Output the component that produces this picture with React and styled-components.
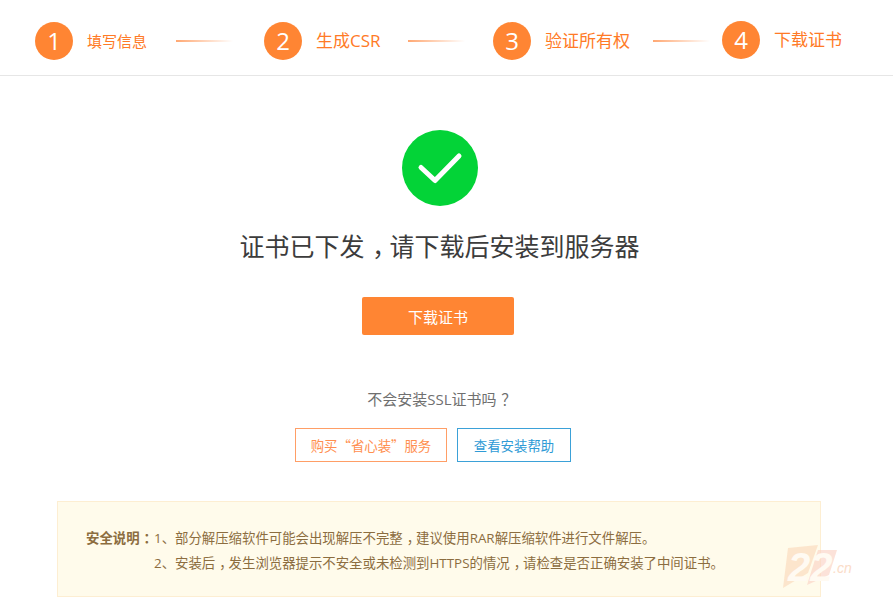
import React from "react";
import styled, { createGlobalStyle } from "styled-components";

const Global = createGlobalStyle`
  html, body { margin: 0; padding: 0; background: #fff; }
  body { font-family: "Open Sans", "Noto Sans CJK SC", sans-serif; }
`;
const Page = styled.div`
  position: relative;
  width: 893px;
  height: 604px;
  overflow: hidden;
`;
const Steps = styled.div`
  height: 53px;
  border-bottom: 1px solid #e6e6e6;
  display: flex;
  align-items: flex-start;
  padding: 22px 0 0 35px;
`;
const Step = styled.div`
  display: flex;
  align-items: center;
  margin-top: ${(p) => (p.$up ? "-1px" : "0")};
`;
const Circle = styled.div`
  width: 38px;
  height: 38px;
  border-radius: 50%;
  background: #ff8533;
  color: #fff;
  font-size: 24px;
  line-height: 38px;
  text-align: center;
  margin-right: 14px;
`;
const StepLabel = styled.span`
  color: #ff7a26;
  font-size: ${(p) => p.$size}px;
  line-height: 38px;
  white-space: nowrap;
  width: ${(p) => p.$w}px;
`;
const Line = styled.div`
  width: 57px;
  height: 2px;
  margin-left: ${(p) => p.$ml}px;
  margin-right: ${(p) => p.$mr}px;
  background: linear-gradient(to right, #ffa873, rgba(255, 168, 115, 0));
`;
const Main = styled.main`
  width: 879px;
  display: flex;
  flex-direction: column;
  align-items: center;
  padding-top: 54px;
`;
const Title = styled.h1`
  margin: 23px 0 0;
  font-size: 25px;
  font-weight: 400;
  line-height: 34px;
  color: #3c3c3c;
  white-space: nowrap;
`;
const Punct = styled.span`
  margin-left: 0.3em;
  letter-spacing: -0.3em;
`;
const Primary = styled.button`
  width: 152px;
  height: 38px;
  margin: 34px 3px 0 0;
  border: 0;
  border-radius: 2px;
  background: #ff8533;
  color: #fff;
  font: inherit;
  font-size: 15px;
  padding: 0;
`;
const Question = styled.p`
  margin: 53px 0 0;
  font-size: 15px;
  line-height: 22px;
  color: #6f6f6f;
  white-space: nowrap;
`;
const Actions = styled.div`
  display: flex;
  gap: 10px;
  margin: 18px 13px 0 0;
`;
const Outline = styled.a`
  width: ${(p) => p.$w}px;
  height: 34px;
  box-sizing: border-box;
  border: 1px solid ${(p) => p.$border};
  color: ${(p) => p.$color};
  font-family: "Noto Sans CJK SC", sans-serif;
  font-size: 13.4px;
  line-height: 32px;
  text-align: center;
  white-space: nowrap;
`;
const Notice = styled.section`
  width: 764px;
  height: 96px;
  box-sizing: border-box;
  margin: 39px 1px 0 0;
  padding: 24px 0 0 28px;
  background: #fffbeb;
  border: 1px solid #fdeed2;
  color: #8c6d3f;
  font-size: 13.4px;
  line-height: 25px;
  display: flex;
`;
const NoticeHead = styled.strong`
  font-weight: 700;
  width: 68px;
  flex: none;
  white-space: nowrap;
`;
const NoticeList = styled.div`
  white-space: nowrap;
`;
const Watermark = styled.svg`
  position: absolute;
  left: 782px;
  top: 543px;
  width: 72px;
  height: 52px;
`;

export default function App() {
  return (
    <Page>
      <Global />
      <Steps>
        <Step>
          <Circle>1</Circle>
          <StepLabel $size={15} $w={61}>填写信息</StepLabel>
          <Line $ml={28} $mr={31} />
        </Step>
        <Step>
          <Circle>2</Circle>
          <StepLabel $size={17} $w={66}>生成CSR</StepLabel>
          <Line $ml={26} $mr={28} />
        </Step>
        <Step>
          <Circle>3</Circle>
          <StepLabel $size={17} $w={86}>验证所有权</StepLabel>
          <Line $ml={22} $mr={12} />
        </Step>
        <Step $up>
          <Circle>4</Circle>
          <StepLabel $size={17} $w={68}>下载证书</StepLabel>
        </Step>
      </Steps>
      <Main>
        <svg width="76" height="76" viewBox="0 0 76 76">
          <circle cx="38" cy="38" r="38" fill="#03d337" />
          <path d="M19 37.5 L33 50.5 L57 26" fill="none" stroke="#fff" strokeWidth="5" strokeLinecap="round" strokeLinejoin="round" />
        </svg>
        <Title>证书已下发<Punct>，</Punct>请下载后安装到服务器</Title>
        <Primary>下载证书</Primary>
        <Question>不会安装SSL证书吗<Punct>？</Punct></Question>
        <Actions>
          <Outline $w={152} $border="#ff9e66" $color="#ff8f50">购买“省心装”服务</Outline>
          <Outline $w={114} $border="#3ba1d8" $color="#2f9bd6">查看安装帮助</Outline>
        </Actions>
        <Notice>
          <NoticeHead>安全说明<Punct>：</Punct></NoticeHead>
          <NoticeList>
            <div>1、部分解压缩软件可能会出现解压不完整<Punct>，</Punct>建议使用RAR解压缩软件进行文件解压。</div>
            <div>2、安装后<Punct>，</Punct>发生浏览器提示不安全或未检测到HTTPS的情况<Punct>，</Punct>请检查是否正确安装了中间证书。</div>
          </NoticeList>
        </Notice>
      </Main>
      <Watermark viewBox="0 0 72 52">
        <polygon points="6,5 36,2 26,30 1,45" fill="#fbe0c4" opacity="0.8" />
        <polygon points="36,7 55,7 47,32 25,42" fill="#fbd3c4" opacity="0.65" />
        <text x="6" y="38" fontFamily="Liberation Sans" fontWeight="700" fontStyle="italic" fontSize="40" fill="#fffaf2">22</text>
        <text x="51" y="30" fontFamily="Liberation Sans" fontStyle="italic" fontSize="14" fill="#fbdcc8">.cn</text>
      </Watermark>
    </Page>
  );
}
